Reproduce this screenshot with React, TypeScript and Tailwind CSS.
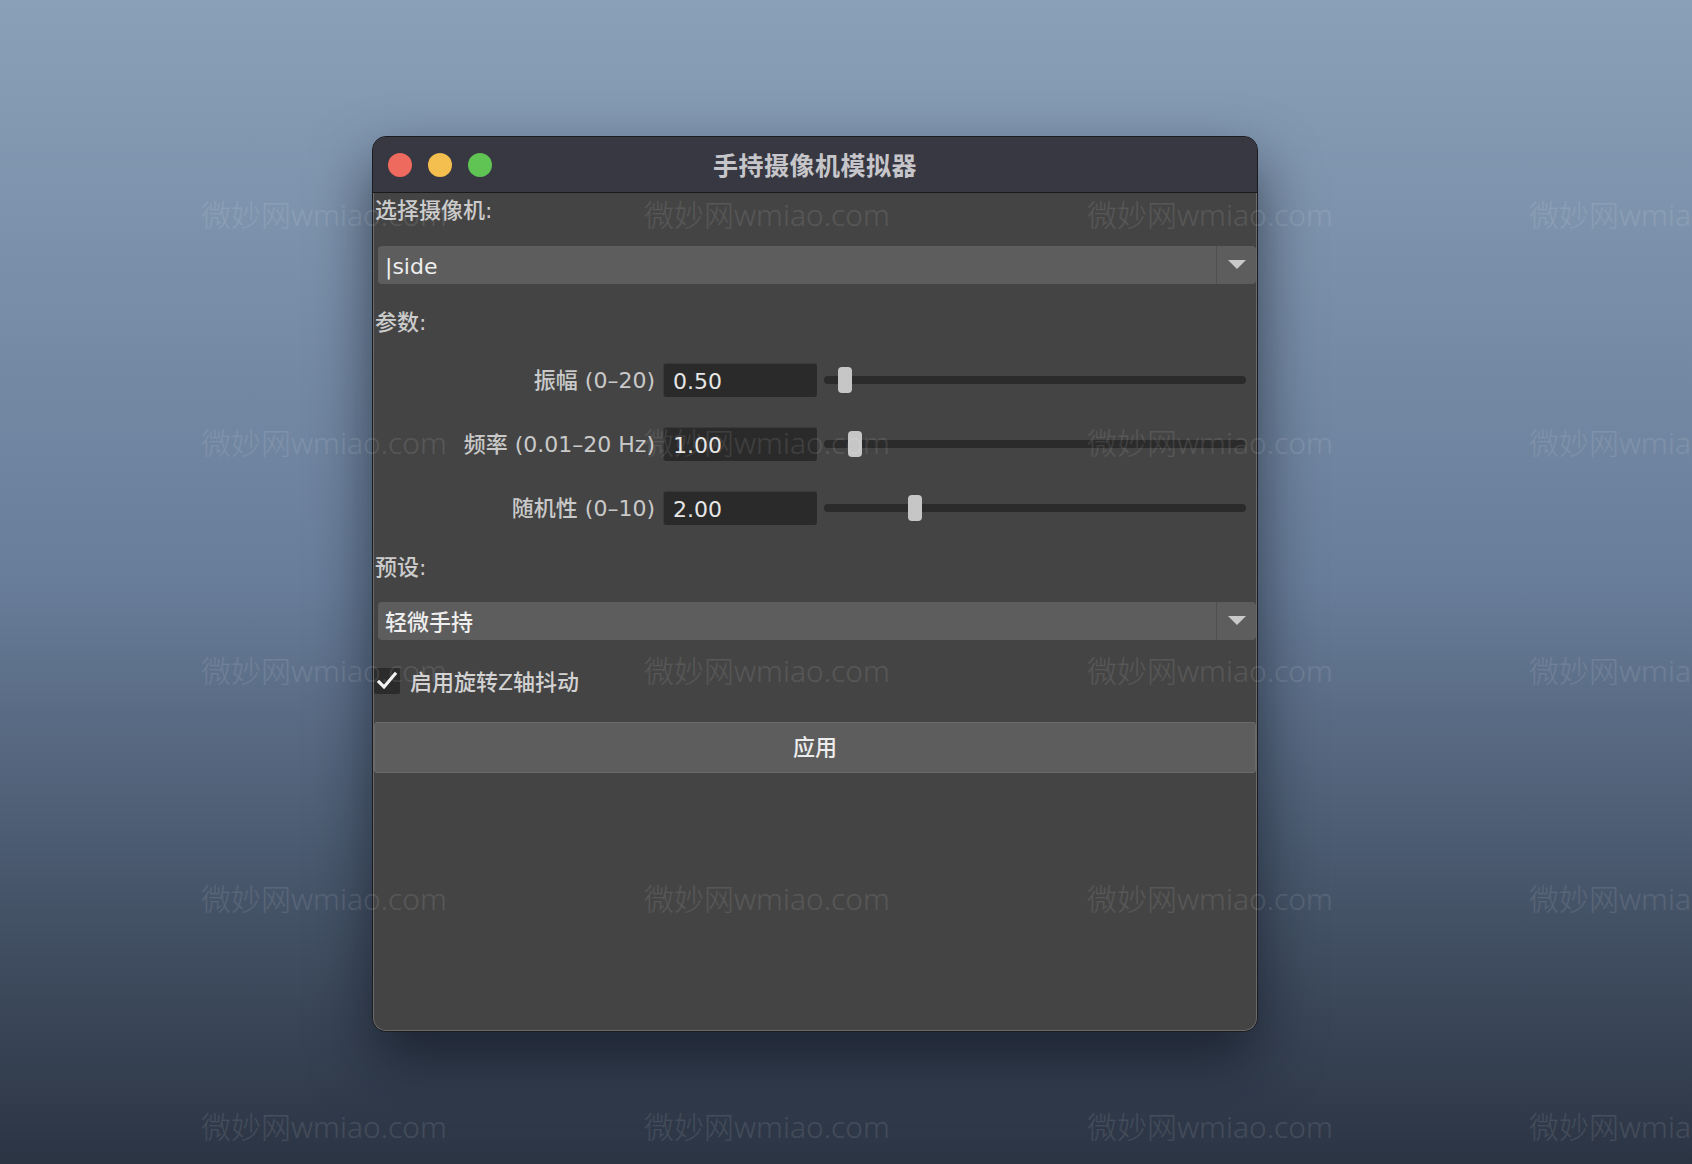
import React from "react";

const sliders = [
  { label: "振幅 (0–20)", value: 0.5, min: 0, max: 20 },
  { label: "频率 (0.01–20 Hz)", value: 1.0, min: 0.01, max: 20 },
  { label: "随机性 (0–10)", value: 2.0, min: 0, max: 10 },
];

const watermarkCols = [201, 644, 1087, 1529];
const watermarkRows = [0, 1, 2, 3, 4];

function Dropdown({ value }: { value: string }) {
  return (
    <div className="ml-[4px] flex h-[38px] items-stretch rounded-[4px] bg-[#5d5d5d]">
      <div className="flex flex-1 items-center pl-[7px] pt-[2px] text-[22px] font-medium text-[#eeeeee]">{value}</div>
      <div className="w-[1px] bg-[#4f4f4f]" />
      <div className="flex w-[39px] items-center justify-center">
        <svg width="18" height="10" viewBox="0 0 18 10">
          <polygon points="0,0 18,0 9,9" fill="#c9c9c9" />
        </svg>
      </div>
    </div>
  );
}

function SliderRow({ label, value, min, max }: { label: string; value: number; min: number; max: number }) {
  const frac = (value - min) / (max - min);
  return (
    <div className="flex h-[34px] items-center">
      <div className="w-[281px] pt-[1px] text-right text-[22px] font-medium text-[#c9c9c9]">{label}</div>
      <div className="ml-[8px] flex h-[34px] w-[154px] items-center rounded-[3px] border-t border-l border-[#3a3a3a] bg-[#2a2a2a] pl-[9px] pt-[2px] text-[22px] text-[#e6e6e6]">
        {value.toFixed(2)}
      </div>
      <div className="relative ml-[7px] mr-[10px] flex h-[26px] flex-1 items-center">
        <div className="h-[8px] w-full rounded-full bg-[#2b2b2b]" />
        <div
          className="absolute top-0 h-[26px] w-[14px] rounded-[4px] bg-[#c6c6c6]"
          style={{ left: `calc(4px + ${frac} * (100% - 22px))` }}
        />
      </div>
    </div>
  );
}

export default function App() {
  return (
    <div className="relative h-[1164px] w-full overflow-hidden bg-gradient-to-b from-[#8aa0b8] via-[#687d99] to-[#2b3443] font-['DejaVu_Sans','Noto_Sans_CJK_SC',sans-serif]">
      <div className="pl-[372px] pt-[136px]">
        <div className="flex h-[896px] w-[886px] flex-col overflow-hidden rounded-[14px] border border-[#1c1c20] bg-[#444444] shadow-[0_28px_60px_rgba(10,15,25,0.6)]">
          {/* title bar */}
          <div className="grid h-[56px] grid-cols-[1fr_auto_1fr] items-center border-b border-[#1a1a1c] bg-[#383842]">
            <div className="flex gap-[16px] pl-[15px]">
              <div className="h-[24px] w-[24px] rounded-full bg-[#ee6a5e]" />
              <div className="h-[24px] w-[24px] rounded-full bg-[#f5bf4f]" />
              <div className="h-[24px] w-[24px] rounded-full bg-[#5fc454]" />
            </div>
            <div className="font-['Noto_Sans_CJK_SC',sans-serif] text-[25px] font-bold tracking-[0.5px] text-[#c6c6ca]">
              手持摄像机模拟器
            </div>
            <div />
          </div>

          {/* body */}
          <div className="flex flex-1 flex-col rounded-b-[13px] border-x border-b border-[#6a6a6a]">
            <div className="flex h-[35px] items-center pl-[1px] text-[22px] font-medium text-[#cbcbcb]">选择摄像机:</div>
            <div className="mt-[18px]">
              <Dropdown value="|side" />
            </div>
            <div className="mt-[20px] flex h-[36px] items-center pl-[1px] text-[22px] font-medium text-[#cbcbcb]">参数:</div>
            <div className="mt-[23px] flex flex-col gap-[30px]">
              {sliders.map((s) => (
                <SliderRow key={s.label} {...s} />
              ))}
            </div>
            <div className="mt-[24px] flex h-[36px] items-center pl-[1px] text-[22px] font-medium text-[#cbcbcb]">预设:</div>
            <div className="mt-[17px]">
              <Dropdown value="轻微手持" />
            </div>
            <div className="mt-[28px] flex h-[26px] items-center gap-[10px]">
              <div className="flex h-[26px] w-[26px] items-center justify-center rounded-[2px] bg-[#2b2b2b]">
                <svg width="22" height="22" viewBox="0 0 22 22">
                  <path d="M3 12 L8 17 L19 4" fill="none" stroke="#f2f2f2" strokeWidth="3.2" strokeLinecap="square" />
                </svg>
              </div>
              <div className="pt-[2px] text-[22px] font-medium text-[#d2d2d2]">启用旋转Z轴抖动</div>
            </div>
            <div className="mt-[28px] flex h-[51px] items-center justify-center rounded-[3px] border border-[#6a6a6a] bg-[#5d5d5d] text-[22px] font-medium text-[#ececec]">
              应用
            </div>
          </div>
        </div>
      </div>

      {/* watermark overlay */}
      <div className="pointer-events-none absolute inset-0 flex flex-col gap-[186px] pt-[194px] font-['Noto_Sans','Noto_Sans_CJK_SC',sans-serif]">
        {watermarkRows.map((r) => (
          <div key={r} className="relative h-[42px]">
            {watermarkCols.map((x) => (
              <span
                key={x}
                className="absolute top-0 whitespace-nowrap text-[30px] font-light leading-[42px] text-white/[0.1]"
                style={{ left: x }}
              >
                微妙网wmiao.com
              </span>
            ))}
          </div>
        ))}
      </div>
    </div>
  );
}
